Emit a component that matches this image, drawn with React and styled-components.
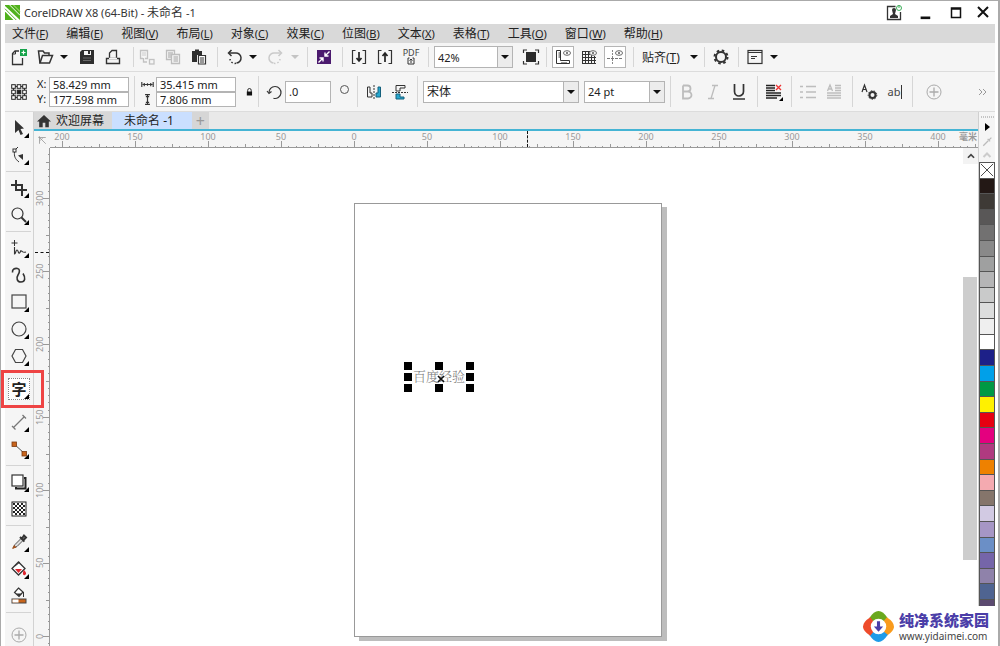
import React from 'react';
import styled, { createGlobalStyle, css } from 'styled-components';

const GlobalStyle = createGlobalStyle`
  * { box-sizing: border-box; }
  body {
    margin: 0;
    background: #fff;
    color: #222;
    font-family: 'Noto Sans', 'Noto Sans CJK SC', sans-serif;
    font-size: 12px;
  }
  button, input, select { font: inherit; color: inherit; }
`;

const MENUS = [
  ['文件', 'F'], ['编辑', 'E'], ['视图', 'V'], ['布局', 'L'], ['对象', 'C'], ['效果', 'C'],
  ['位图', 'B'], ['文本', 'X'], ['表格', 'T'], ['工具', 'O'], ['窗口', 'W'], ['帮助', 'H'],
];

const SWATCHES = [
  '#231815', '#3e3a36', '#595757', '#727171', '#898989', '#9fa0a0', '#b5b5b6', '#c9caca',
  '#dcdddd', '#efefef', '#ffffff', '#1d2088', '#00a0e9', '#009944', '#fff100', '#e60012',
  '#e4007f', '#b03a80', '#ee8100', '#f4aab0', '#85756b', '#d2cae3', '#a696c5', '#6b8fc6',
  '#7565a9', '#8f82aa', '#4f6491', '#5b4a70', '#5b4a70', '#5b4a70',
];

// the first cell of each ruler is only partly in view and has no number
const H_MARKS = ['', 200, 150, 100, 50, 0, 50, 100, 150, 200, 250, 300, 350, 400];
const V_MARKS = ['', 300, 250, 200, 150, 100, 50, 0];

const ICONS = {
  newDoc: (
    <>
      <path d="M8 2H4L1.500 4.500V15.500H11.500V9" stroke="#333" strokeWidth="1.300" />
      <path d="M4.500 2V5H1.500" stroke="#333" />
      <rect x="9" y="0" width="7" height="7" fill="#16a34a" />
      <path d="M12.500 1.500V5.500M10.500 3.500H14.500" stroke="#fff" strokeWidth="1.200" />
    </>
  ),
  open: (
    <>
      <path d="M3 14L1.500 2H6L7.500 4H12V6" stroke="#333" strokeWidth="1.500" />
      <path d="M3 14L5.500 6.500H15.500L12.500 14Z" stroke="#333" strokeWidth="1.500" fill="#f5f5f5" />
    </>
  ),
  save: (
    <>
      <path d="M3 1H15V15H1V3Z" fill="#2e2e2e" />
      <rect x="5" y="2" width="7" height="4" fill="#f5f5f5" />
      <rect x="9" y="2" width="2" height="3" fill="#2e2e2e" />
      <path d="M4 9H12M4 11.500H12" stroke="#777" strokeWidth=".8" />
    </>
  ),
  print: (
    <>
      <path d="M4.500 9.500V4L7 1.500H11.500V9.500" stroke="#333" strokeWidth="1.300" />
      <path d="M1.500 9.500H14.500V14.500H1.500Z" stroke="#333" strokeWidth="1.400" />
      <path d="M4 9.500H12" stroke="#f5f5f5" strokeWidth="1.500" />
    </>
  ),
  cut: (
    <g stroke="#c2c2c2" strokeWidth="1.300">
      <path d="M4 9.500H1.500V1.500H8.500V9.500H6" />
      <path d="M3 4H7M3 6H7" strokeWidth=".8" />
      <path d="M4.500 9V13H8" />
      <rect x="10.500" y="10.500" width="4.500" height="4.500" />
    </g>
  ),
  copy: (
    <g stroke="#bdbdbd" strokeWidth="1.300">
      <path d="M6 10.500H1.500V1.500H9.500V5M3 4H8M3 6H6M3 8H6" />
      <path d="M6.500 5.500H14.500V14.500H6.500ZM8.500 8H13M8.500 10H13M8.500 12H13" />
    </g>
  ),
  paste: (
    <>
      <path d="M1 2H4V0.500H8V2H11V6H6V13H1Z" fill="#2e2e2e" />
      <path d="M7.500 6.500H14.500V15H7.500Z" stroke="#333" strokeWidth="1.200" fill="#fff" />
      <path d="M9 9H13M9 11H13M9 13H13" stroke="#333" />
    </>
  ),
  undo: (
    <>
      <path d="M3 4H9.500A5 5 0 0 1 10.500 14" stroke="#333" strokeWidth="1.500" />
      <path d="M10 14.300A5 5 0 0 1 4 10" stroke="#333" strokeWidth="1.500" strokeDasharray="1.500 1.800" />
      <path d="M5.500 1L2.500 4L5.500 7" stroke="#333" strokeWidth="1.500" />
    </>
  ),
  redo: (
    <>
      <path d="M13 4H6.500A5 5 0 0 0 5.500 14" stroke="#cacaca" strokeWidth="1.500" />
      <path d="M6 14.300A5 5 0 0 0 12 10" stroke="#cacaca" strokeWidth="1.500" strokeDasharray="1.500 1.800" />
      <path d="M10.500 1L13.500 4L10.500 7" stroke="#cacaca" strokeWidth="1.500" />
    </>
  ),
  connect: (
    <>
      <rect x="1" y="1" width="14" height="14" fill="#4b1a6e" />
      <path d="M9 7L13.500 2.500M9 3.500V7H12.500M7 9L2.500 13.500M3.500 9H7V12.500" stroke="#fff" strokeWidth="1.400" />
    </>
  ),
  importFile: (
    <>
      <path d="M4.500 1.500H1.500V14.500H4.500M11.500 1.500H14.500V14.500H11.500" stroke="#333" strokeWidth="1.200" />
      <path d="M8 3V12M5.500 9L8 12L10.500 9" stroke="#222" strokeWidth="1.700" />
    </>
  ),
  exportFile: (
    <>
      <path d="M4.500 1.500H1.500V14.500H4.500M11.500 1.500H14.500V14.500H11.500" stroke="#333" strokeWidth="1.200" />
      <path d="M8 13V4M5.500 7L8 4L10.500 7" stroke="#222" strokeWidth="1.700" />
    </>
  ),
  uploadBox: (
    <path d="M2.500 1H1V7H7V1H5.500M4 6V2.500M2.500 3.500L4 2L5.500 3.500" stroke="#333" />
  ),
  fullScreen: (
    <>
      <rect x="3" y="3" width="10" height="10" fill="#2b2b2b" />
      <path d="M.5 4V1H4M12 1H15.500V4M15.500 12V15H12M4 15H.5V12" stroke="#333" strokeWidth="1.200" />
    </>
  ),
  rulers: (
    <>
      <path d="M1.500 1.500H5.500V11.500H14.500V14.500H1.500Z" stroke="#333" />
      <path d="M3.500 4H5.500M3.500 6H5.500M3.500 8H5.500M7 13V14M9 13V14M11 13V14" stroke="#333" />
      <ellipse cx="12" cy="4" rx="3.500" ry="2.300" stroke="#666" />
      <circle cx="12" cy="4" r="1" fill="#555" />
    </>
  ),
  grid: (
    <>
      <path d="M1.500 2V15M4.500 2V15M7.500 2V15M10.500 2V15M13.500 7V15M1 2.500H9M1 5.500H9M1 8.500H15M1 11.500H15M1 14.500H15" stroke="#333" />
      <ellipse cx="12" cy="4" rx="3.500" ry="2.300" stroke="#666" fill="#f5f5f5" />
      <circle cx="12" cy="4" r="1" fill="#555" />
    </>
  ),
  guides: (
    <>
      <path d="M5.500 1V15" stroke="#888" strokeDasharray="2 1" />
      <path d="M0 9.500H16" stroke="#777" strokeDasharray="3 1" />
      <ellipse cx="12" cy="4" rx="3.500" ry="2.300" stroke="#666" />
      <circle cx="12" cy="4" r="1" fill="#555" />
    </>
  ),
  gear: (
    <>
      <circle cx="8" cy="8" r="5" stroke="#333" strokeWidth="2" />
      <circle cx="8" cy="8" r="6.500" stroke="#333" strokeWidth="2" strokeDasharray="2.550 2.550" />
    </>
  ),
  launcher: (
    <>
      <rect x="1" y="1.500" width="14" height="13" stroke="#333" strokeWidth="1.200" />
      <path d="M1 3.500H15M4 7.500H10M4 9.500H8" stroke="#333" />
    </>
  ),
  origin: (
    <>
      <path d="M2.500 2.500H13.500V13.500H2.500Z" stroke="#333" />
      {[2.5, 8, 13.5].map((x) => [2.5, 8, 13.5].map((y) => (
        <rect key={`${x}-${y}`} x={x - 1.8} y={y - 1.8} width="3.600" height="3.600"
          stroke="#222" fill={x === 8 && y === 8 ? '#222' : '#fff'} />
      )))}
    </>
  ),
  rotate: (
    <>
      <path d="M2 9A6 6 0 1 1 6.500 14.300" stroke="#333" strokeWidth="1.200" />
      <path d="M0 7L2 9.500L4.500 7.500" stroke="#333" strokeWidth="1.200" />
    </>
  ),
  mirrorH: (
    <>
      <path d="M1.500 3V13H6V9H4V3Z" stroke="#333" />
      <path d="M8 1V16" stroke="#333" strokeDasharray="2 1" />
      <path d="M14.500 3V13H10V9H12V3Z" stroke="#14607c" fill="#27a7cf" />
    </>
  ),
  mirrorV: (
    <>
      <path d="M4 7V1.500H13V4H8V7Z" stroke="#333" />
      <path d="M0 8.500H16" stroke="#333" strokeDasharray="2 1" />
      <path d="M4 10V15H12V13H8V10Z" stroke="#14607c" fill="#27a7cf" />
    </>
  ),
  bold: <path d="M4 1.500V14.500H9A3.500 3.500 0 0 0 9 7.500H4M4 1.500H8.500A3 3 0 0 1 8.500 7.500" stroke="#bdbdbd" strokeWidth="1.800" />,
  italic: <path d="M7 1.500H13M3 14.500H9M10 1.500L6 14.500" stroke="#bdbdbd" strokeWidth="1.300" />,
  underline: <path d="M3.500 0V7.500A4.500 4.500 0 0 0 12.500 7.500V0M2 15H14" stroke="#333" strokeWidth="1.700" />,
  align: (
    <>
      <path d="M0 1.500H9M0 4H9M0 6.500H9M0 9H15M0 11.500H15M0 14H11" stroke="#222" strokeWidth="1.300" />
      <path d="M10 1L15 6M15 1L10 6" stroke="#e33" strokeWidth="1.300" />
      <path d="M17 13V17H13Z" fill="#000" />
    </>
  ),
  bullets: <path d="M0 2.500H3M0 8H3M0 13.500H3M6 2.500H16M6 8H16M6 13.500H16" stroke="#bdbdbd" strokeWidth="1.300" />,
  dropCap: <path d="M1.500 7L4 1L6.500 7M2.500 5H5.500M9 1.500H15M9 4H15M9 6.500H15M1 9H15M1 11.500H15M1 14H15" stroke="#bdbdbd" strokeWidth="1.300" />,
  textProps: (
    <>
      <path d="M1 8L3.500 1L6 8M2 5.500H5" stroke="#333" strokeWidth="1.200" />
      <circle cx="11.500" cy="11" r="3" stroke="#333" strokeWidth="2" />
      <circle cx="11.500" cy="11" r="4.300" stroke="#333" strokeDasharray="1.500 1.500" />
    </>
  ),
  plus: (
    <>
      <circle cx="8" cy="8" r="7" stroke="#aaa" />
      <path d="M8 3.500V12.500M3.500 8H12.500" stroke="#aaa" strokeWidth="1.300" />
    </>
  ),
  pick: <path d="M4 0V13L7.500 10L9.500 15L12 14L9.500 9L13 8.500Z" fill="#333" />,
  shape: (
    <>
      <path d="M3.500 5C3 9 4 12 8 15M4 3L7 0" stroke="#333" />
      <rect x="2" y="2" width="3" height="3" fill="#fff" stroke="#333" />
      <path d="M7 8.500L12 7V13Z" fill="#333" />
    </>
  ),
  crop: <path d="M5 0V10H16M0 5H11V16" stroke="#333" strokeWidth="2" />,
  zoom: (
    <>
      <circle cx="6.500" cy="6.500" r="5.500" stroke="#333" strokeWidth="1.200" />
      <path d="M10.500 10.500L15 15" stroke="#333" strokeWidth="2" />
    </>
  ),
  freehand: (
    <>
      <path d="M3.500 0V6M.5 3H6.500" stroke="#333" />
      <path d="M3.500 7V14C5 14 4.500 10 6 10S7 14 8.500 13S9 10 10.500 11S12 13 15 12" stroke="#333" strokeWidth="1.100" />
    </>
  ),
  artistic: <path d="M1.500 5.500C1 2 4 1 6.500 1.500S9 5 7 8S6 15 10 15S15 11 12 6.500" stroke="#333" strokeWidth="1.600" />,
  rect: <rect x="1" y="1" width="14" height="13" stroke="#444" strokeWidth="1.200" />,
  ellipse: <circle cx="8" cy="8" r="7" stroke="#444" strokeWidth="1.200" />,
  polygon: <path d="M4.500 1.500H11.500L15 8L11.500 14.500H4.500L1 8Z" stroke="#444" strokeWidth="1.200" />,
  dimension: (
    <>
      <path d="M2.500 13.500L13 3" stroke="#777" strokeWidth="1.300" />
      <path d="M1 12L4.500 15.500M11.500 1L15 4.500" stroke="#777" strokeWidth="1.300" />
    </>
  ),
  connector: (
    <>
      <path d="M3 3L13 12" stroke="#555" />
      <rect x="1" y="1" width="4.500" height="4.500" fill="#c8641c" stroke="#7a3a10" strokeWidth=".8" />
      <rect x="11" y="10.500" width="4.500" height="4.500" fill="#c8641c" stroke="#7a3a10" strokeWidth=".8" />
    </>
  ),
  shadow: (
    <>
      <path d="M13 4H14.500V14.500H5V13" stroke="#222" strokeWidth="2" />
      <rect x="1" y="1" width="11" height="11" fill="#fff" stroke="#333" strokeWidth="1.200" />
    </>
  ),
  checker: (
    <>
      <rect x="1" y="1" width="14" height="14" fill="#fff" stroke="#222" />
      {[0, 1, 2, 3, 4, 5].map((r) => [0, 1, 2].map((c) => (
        <rect key={`${r}-${c}`} x={2 + c * 4 + (r % 2) * 2} y={2 + r * 2} width="2" height="2" fill="#222" />
      )))}
    </>
  ),
  dropper: (
    <>
      <path d="M2 14L4 10.500L10 4.500L12 6.500L6 12.500Z" fill="#ddd" stroke="#555" />
      <path d="M1 15L3 11L5.500 13.500Z" fill="#a5531c" />
      <path d="M9 3L13.500 7.500M11 4.500L13 1.500L15 3.500L12.500 6Z" stroke="#333" strokeWidth="2" />
    </>
  ),
  fill: (
    <>
      <path d="M7.500 1L14 7.500L7.500 14L1 7.500Z" fill="#fff" stroke="#333" strokeWidth="1.300" />
      <path d="M4 8H11L7.500 12Z" fill="#e0262e" />
      <path d="M13 9C15 11 16 13 14 14S11 12 13 9Z" fill="#e0262e" />
      <path d="M4 5L9 1" stroke="#333" />
    </>
  ),
  outline: (
    <>
      <path d="M7.500 0L12 4L8 8.500L3.500 4.500Z" fill="#fff" stroke="#333" strokeWidth="1.200" />
      <path d="M5 5.500H11L8 8.500Z" fill="#333" />
      <path d="M12.500 4V9" stroke="#333" />
      <rect x="1" y="11" width="14" height="4" fill="#c8641c" stroke="#444" />
      <rect x="1.500" y="11.500" width="6" height="3" fill="#fff" />
    </>
  ),
  home: <path d="M8 1L0 8.500H2.500V15H6.500V10H9.500V15H13.500V8.500H16Z" fill="#333" />,
  logo: (
    <>
      <path d="M0 0H16V16H0Z" fill="#4fb11c" />
      <path d="M0 1L16 16H9L0 7Z" fill="#fff" />
      <path d="M0 4L12 16" stroke="#4fb11c" />
      <path d="M5 0L16 11" stroke="#fff" />
      <path d="M9 0L16 7" stroke="#b8e08a" />
    </>
  ),
  user: (
    <>
      <path d="M9.500 1.500H1.500V14.500H14.500V7" stroke="#333" strokeWidth="1.300" />
      <path d="M6 5A2 2 0 0 1 10 5L9 9L12 11V13H4V11L7 9Z" fill="#333" />
      <circle cx="13" cy="3" r="2.500" stroke="#3dae5a" />
      <path d="M13 0V3" stroke="#3dae5a" />
    </>
  ),
  minimize: <path d="M3 13.500H14" stroke="#111" strokeWidth="3" />,
  maximize: <path d="M3.500 3H12.500V12.500H3.500ZM3.500 4H12.500" stroke="#111" strokeWidth="1.500" />,
  close: <path d="M3 2L13 12M13 2L3 12" stroke="#111" strokeWidth="2" />,
  widthArrow: <path d="M1 5V11M15 5V11M2 8H14M4 6V10M12 6V10M8 6.500V9.500" stroke="#333" strokeWidth="1.400" />,
  heightArrow: <path d="M5 2H11M5 14H11M8 2V14M6 4.500H10M6 11.500H10" stroke="#333" strokeWidth="1.500" />,
  lock: (
    <>
      <rect x="5.500" y="7.500" width="6" height="4.500" fill="#111" />
      <path d="M6.500 8V6A2 2 0 0 1 10.500 6V8" stroke="#111" />
    </>
  ),
  chevronUp: <path d="M4.500 10L8 6.500L11.500 10" stroke="currentColor" strokeWidth="2" />,
  chevrons: <path d="M5 5L8 8L5 11M9 5L12 8L9 11" stroke="#999" />,
  cross: <path d="M1 1L15 15M15 1L1 15" stroke="#333" />,
  corner: <path d="M2 4H14M4 2V14M3 3L14 14M5 9L9 5" stroke="#999" strokeWidth="1.300" />,
  eyedropper: <path d="M2 14L10 6M9 3L13 7M11 5L15 1" stroke="#bbb" strokeWidth="2" />,
  centre: <path d="M4 4L12 12M12 4L4 12" stroke="#111" strokeWidth="2.200" />,
};

const Svg = styled.svg`
  display: block;
  flex: none;
  width: ${(p) => p.$size}px;
  height: ${(p) => p.$size}px;
  overflow: visible;
`;

const Icon = ({ name, size = 16 }) => (
  <Svg viewBox="0 0 16 16" fill="none" $size={size} aria-hidden="true">{ICONS[name]}</Svg>
);

const Arrow = styled.span`
  width: 0;
  height: 0;
  border: 4px solid transparent;
  border-top-color: ${(p) => (p.$muted ? '#c4c4c4' : '#111')};
  border-bottom: 0;
`;

const Latin = styled.span`
  font-size: 11px;
`;

const Window = styled.div`
  position: relative;
  display: flex;
  flex-direction: column;
  height: 100vh;
  padding: 0 3px 0 4px;
  overflow: hidden;
  border: solid #aaa;
  border-width: 1px 2px 0 1px;
`;

const TitleBar = styled.header`
  display: flex;
  align-items: center;
  flex: none;
  height: 23px;
  color: #333;
`;

const Title = styled.h1`
  flex: 1;
  margin: 0 0 0 4px;
  font-size: 12px;
  font-weight: 400;
  line-height: 20px;
`;

const TitleButton = styled.button`
  display: grid;
  place-items: center;
  width: 31px;
  height: 22px;
  padding: 0;
  border: 0;
  background: none;
  &:last-child { width: 24px; }
`;

const MenuBar = styled.nav`
  display: flex;
  flex: none;
  height: 19px;
  background: #d9d9d9;
`;

const MenuButton = styled.button`
  padding: 0 11px 0 7px;
  border: 0;
  background: none;
  line-height: 19px;
  white-space: nowrap;
`;

const Bar = styled.div`
  display: flex;
  flex: none;
  height: ${(p) => p.$height}px;
  padding: 4px 0;
  border-bottom: 1px solid #dcdcdc;
  background: #f5f5f5;
`;

const Group = styled.div`
  display: flex;
  align-items: center;
  flex: none;
  width: ${(p) => p.$width}px;
  padding-left: ${(p) => p.$pad || 0}px;
  border-right: 1px solid #d6d6d6;
  &:last-child { flex: 1; border: 0; }
`;

const ToolButton = styled.button`
  display: flex;
  flex-direction: column;
  align-items: center;
  justify-content: center;
  flex: none;
  width: 26px;
  height: 26px;
  padding: 0;
  border: 0;
  background: none;
`;

const ActiveTool = styled(ToolButton)`
  width: 22px;
  height: 22px;
  margin: 0 2px;
  border: 1px solid #b5b5b5;
  background: #fff;
`;

const CaretButton = styled(ToolButton)`
  align-items: flex-start;
  width: 16px;
  padding-left: 2px;
`;

const PushRight = styled.span`
  flex: 1;
`;

const PdfText = styled.span`
  color: #444;
  font-size: 9px;
  line-height: 8px;
`;

const TextButton = styled.button`
  padding: 0;
  border: 0;
  background: none;
  white-space: nowrap;
`;

const SelectBox = styled.span`
  position: relative;
  display: block;
  flex: none;
  width: ${(p) => p.$width}px;
  margin-right: 5px;
  height: 22px;

  select {
    width: 100%;
    height: 100%;
    padding: 0 3px;
    border: 1px solid #b4b4b4;
    border-radius: 0;
    appearance: none;
    background: #fff;
    font-size: ${(p) => p.$text}px;
  }
`;

const SelectArrow = styled.span`
  position: absolute;
  top: 1px;
  right: 1px;
  bottom: 1px;
  display: grid;
  place-items: center;
  width: 15px;
  border-left: 1px solid #b4b4b4;
  background: #ececec;
  pointer-events: none;
`;

const FieldGrid = styled.div`
  display: grid;
  grid-template-columns: ${(p) => p.$label}px 80px;
  align-items: center;
  font-size: 11px;

  label {
    display: flex;
    line-height: 14px;
  }
`;

const NumberInput = styled.input`
  width: ${(p) => (p.$tall ? 46 : 80)}px;
  height: ${(p) => (p.$tall ? 22 : 15)}px;
  padding: 0 3px;
  border: 1px solid #b4b4b4;
  background: #fff;
  font-size: 11px;
  line-height: 13px;
`;

const AngleLabel = styled.label`
  display: grid;
  place-items: center;
  width: 20px;
`;

const Ring = styled.span`
  width: 9px;
  height: 9px;
  margin: 0 0 5px 9px;
  border: 1px solid #555;
  border-radius: 50%;
`;

const CaretText = styled.span`
  padding-right: 1px;
  border-right: 1px solid #333;
  color: #444;
  font-size: 11px;
  line-height: 14px;
`;

const Body = styled.div`
  display: flex;
  flex: 1;
  min-height: 0;
`;

const Toolbox = styled.aside`
  flex: none;
  width: 29px;
  padding: 2px 0 0 1px;
  border-right: 1px solid #d2d2d2;
  background: #f5f5f5;
`;

const ToolboxGroup = styled.div`
  margin: 0 2px 2px 0;
  padding-bottom: 3px;
  border-bottom: 1px solid #d4d4d4;
`;

const ToolboxFooter = styled.div`
  padding-top: 6px;
`;

const BoxButton = styled.button`
  position: relative;
  display: grid;
  place-items: center;
  width: 26px;
  height: 27px;
  padding: 0;
  border: 0;
  background: none;

  ${(p) => p.$flyout && css`
    &::after {
      content: '';
      position: absolute;
      right: 3px;
      bottom: 3px;
      border-style: solid;
      border-width: 0 0 5px 5px;
      border-color: transparent transparent #000;
    }
  `}
`;

const TextTool = styled.span`
  display: grid;
  place-items: center;
  width: 22px;
  height: 22px;
  border: 1px dotted #888;
  background: #fff;
  font-size: 15px;
  font-weight: 700;
  line-height: 20px;
`;

const Callout = styled.span`
  position: absolute;
  top: -5px;
  left: -5px;
  width: 43px;
  height: 38px;
  border: 3px solid #ee4444;
  z-index: 2;
`;

const Workspace = styled.main`
  display: flex;
  flex-direction: column;
  flex: 1;
  min-width: 0;
`;

const Tabs = styled.div`
  display: flex;
  flex: none;
  height: 19px;
  border-bottom: 2px solid #45b4d4;
  background: #e9e9e9;
`;

const Tab = styled.button`
  display: flex;
  align-items: center;
  gap: 5px;
  padding: 0 8px 0 3px;
  border: 0;
  background: #d8d8d8;
  line-height: 17px;
  white-space: nowrap;
`;

const ActiveTab = styled(Tab)`
  padding: 0 18px 0 12px;
  background: #cadfff;
`;

const AddTab = styled.button`
  width: 17px;
  padding: 0;
  border: 0;
  background: #d6d6d6;
  color: #999;
  font-size: 16px;
  line-height: 16px;
`;

const RulerRow = styled.div`
  display: flex;
  flex: none;
  height: 17px;
  background: #f5f5f5;
`;

const Corner = styled.div`
  display: grid;
  place-items: center;
  flex: none;
  width: 16px;
`;

const Ruler = styled.div`
  position: relative;
  display: flex;
  overflow: hidden;
  background: #f5f5f5;
  color: #999;
  font-size: 9px;
  line-height: 12px;
`;

const HRuler = styled(Ruler)`
  flex: 1;
  border-bottom: 1px solid #999;
  & > div:first-child { margin-left: -61px; }
`;

const VRuler = styled(Ruler)`
  flex: none;
  flex-direction: column;
  width: 16px;
  border-right: 1px solid #999;
  & > div:first-child { margin-top: -23px; }
`;

const HCell = styled.div`
  position: relative;
  flex: none;
  width: 73px;
  height: 16px;

  span {
    display: block;
    width: 40px;
    margin-left: -20px;
    text-align: center;
  }
  svg { position: absolute; left: 0; bottom: 0; }
`;

const VCell = styled.div`
  position: relative;
  display: flex;
  align-items: flex-start;
  flex: none;
  width: 15px;
  height: 73px;

  span {
    width: 12px;
    height: 40px;
    margin-top: -20px;
    text-align: center;
    writing-mode: vertical-rl;
    transform: rotate(180deg);
  }
  svg { position: absolute; top: 0; right: 0; }
`;

const Unit = styled.span`
  position: absolute;
  top: 0;
  right: 1px;
  background: #f5f5f5;
  font-weight: 700;
`;

const HPointer = styled.span`
  position: absolute;
  left: 477px;
  top: 0;
  bottom: 0;
  border-left: 1px dashed #111;
`;

const VPointer = styled.span`
  position: absolute;
  top: 104px;
  left: 1px;
  right: 0;
  border-top: 1px dashed #111;
`;

const View = styled.div`
  display: flex;
  flex: 1;
  min-height: 0;
`;

const Canvas = styled.div`
  position: relative;
  flex: 1;
  overflow: hidden;
  background: #fff;
`;

const Sheet = styled.div`
  position: absolute;
  left: 304px;
  top: 55px;
  width: 308px;
  height: 434px;
  border: 1px solid #999;
  background: #fff;
  box-shadow: 5px 4px 0 #bdbdbd;
`;

const Selection = styled.div`
  position: absolute;
  left: 49px;
  top: 158px;
  display: grid;
  grid-template-columns: repeat(3, 8px);
  grid-template-rows: repeat(3, 8px);
  justify-content: space-between;
  align-content: space-between;
  width: 70px;
  height: 30px;
`;

const ArtText = styled.span`
  position: absolute;
  inset: 0;
  color: #777;
  font-family: 'Noto Serif CJK SC', 'Noto Sans CJK SC', serif;
  font-size: 13px;
  font-weight: 300;
  line-height: 28px;
  text-align: center;
`;

const Handle = styled.i`
  position: relative;
  display: grid;
  place-items: center;
  background: ${(p) => (p.$centre ? 'none' : '#000')};
`;

const ScrollBar = styled.div`
  display: flex;
  flex-direction: column;
  flex: none;
  width: 15px;
  background: #fff;
`;

const ScrollUp = styled.button`
  display: grid;
  place-items: center;
  height: 16px;
  padding: 0;
  border: 0;
  background: #f3f3f3;
  color: #444;
`;

const ScrollThumb = styled.div`
  flex: 283;
  width: 14px;
  background: #cdcdcd;
`;

const Space = styled.div`
  flex: ${(p) => p.$grow};
`;

const Palette = styled.aside`
  display: flex;
  flex-direction: column;
  flex: none;
  width: 17px;
  border-left: 1px solid #d0d0d0;
  background: #f5f5f5;
`;

const PaletteHead = styled.div`
  display: flex;
  flex-direction: column;
  align-items: center;
  flex: none;
  height: 50px;
  padding-top: 4px;
  color: #ccc;
`;

const Grip = styled.span`
  width: 13px;
  height: 3px;
  border: dotted #c4c4c4;
  border-width: 1px 0;
`;

const PlayMark = styled.span`
  margin: 5px 0 6px;
  border: 4px solid transparent;
  border-left: 5px solid #000;
  border-right: 0;
`;

const Swatch = styled.button`
  display: grid;
  place-items: center;
  flex: 1;
  min-height: 0;
  padding: 0;
  border: 1px solid #555;
  border-bottom: 0;
  background: ${(p) => p.$color};
  overflow: hidden;
`;

const Watermark = styled.a`
  position: absolute;
  right: -2px;
  bottom: 0;
  display: flex;
  align-items: center;
  gap: 4px;
  width: 150px;
  height: 40px;
  padding-left: 12px;
  background: #fff;
  color: #4b3ea8;
  text-decoration: none;
  z-index: 3;
`;

const SiteName = styled.strong`
  display: block;
  font-size: 15px;
  font-weight: 900;
  line-height: 20px;
  white-space: nowrap;
`;

const SiteUrl = styled.small`
  display: block;
  color: #444;
  font-size: 10px;
  line-height: 12px;
`;

const tickLines = [0, 1, 2, 3, 4, 5, 6, 7, 8, 9];
const tickLength = (i) => (i === 0 ? 6 : i === 5 ? 3 : 1);

const HTicks = () => (
  <svg width="73" height="6" stroke="#999" aria-hidden="true">
    {tickLines.map((i) => {
      const x = Math.round(i * 7.3) + 0.5;
      return <path key={i} d={`M${x} 6V${6 - tickLength(i)}`} />;
    })}
  </svg>
);

const VTicks = () => (
  <svg width="6" height="73" stroke="#999" aria-hidden="true">
    {tickLines.map((i) => {
      const y = Math.round(i * 7.3) + 0.5;
      return <path key={i} d={`M6 ${y}H${6 - tickLength(i)}`} />;
    })}
  </svg>
);

const Tool = ({ name, label, size }) => (
  <ToolButton aria-label={label || name}><Icon name={name} size={size} /></ToolButton>
);

const Caret = ({ muted }) => (
  <CaretButton aria-label="more"><Arrow $muted={muted} /></CaretButton>
);

const Dropdown = ({ width, label, value, text = 11 }) => (
  <SelectBox $width={width} $text={text}>
    <select aria-label={label} defaultValue={value}>
      <option>{value}</option>
    </select>
    <SelectArrow><Arrow /></SelectArrow>
  </SelectBox>
);

const ToolboxButton = ({ name, flyout = true }) => (
  <BoxButton $flyout={flyout} aria-label={name}><Icon name={name} /></BoxButton>
);

const StandardBar = () => (
  <Bar $height={29}>
    <Group $width={129} $pad={1}>
      <Tool name="newDoc" />
      <Tool name="open" />
      <Caret />
      <Tool name="save" />
      <Tool name="print" />
    </Group>
    <Group $width={84}>
      <Tool name="cut" />
      <Tool name="copy" />
      <Tool name="paste" />
    </Group>
    <Group $width={90} $pad={3}>
      <Tool name="undo" />
      <Caret />
      <Tool name="redo" />
      <Caret muted />
    </Group>
    <Group $width={35} $pad={3}>
      <Tool name="connect" />
    </Group>
    <Group $width={86} $pad={3}>
      <Tool name="importFile" />
      <Tool name="exportFile" />
      <ToolButton aria-label="PDF">
        <PdfText>PDF</PdfText>
        <Svg viewBox="0 0 8 8" fill="none" $size={8}>{ICONS.uploadBox}</Svg>
      </ToolButton>
    </Group>
    <Group $width={118} $pad={5}>
      <Dropdown width={79} label="zoom" value="42%" />
      <Tool name="fullScreen" />
    </Group>
    <Group $width={87} $pad={3}>
      <ActiveTool aria-label="rulers"><Icon name="rulers" /></ActiveTool>
      <Tool name="grid" />
      <ActiveTool aria-label="guides"><Icon name="guides" /></ActiveTool>
    </Group>
    <Group $width={71} $pad={8}>
      <TextButton>贴齐(<u>T</u>)</TextButton>
      <PushRight />
      <Caret />
    </Group>
    <Group $width={34} $pad={3}>
      <Tool name="gear" />
    </Group>
    <Group $pad={3}>
      <Tool name="launcher" />
      <Caret />
    </Group>
  </Bar>
);

const PropertyBar = () => (
  <Bar $height={40}>
    <Group $width={130} $pad={1}>
      <Tool name="origin" />
      <PushRight />
      <FieldGrid $label={12}>
        <label htmlFor="pos-x">X:</label>
        <NumberInput id="pos-x" defaultValue="58.429 mm" />
        <label htmlFor="pos-y">Y:</label>
        <NumberInput id="pos-y" defaultValue="177.598 mm" />
      </FieldGrid>
      <PushRight />
    </Group>
    <Group $width={124} $pad={6}>
      <FieldGrid $label={15}>
        <label htmlFor="size-w" aria-label="width"><Icon name="widthArrow" size={13} /></label>
        <NumberInput id="size-w" defaultValue="35.415 mm" />
        <label htmlFor="size-h" aria-label="height"><Icon name="heightArrow" size={13} /></label>
        <NumberInput id="size-h" defaultValue="7.806 mm" />
      </FieldGrid>
      <ToolButton aria-label="lock ratio"><Icon name="lock" size={14} /></ToolButton>
    </Group>
    <Group $width={99} $pad={6}>
      <AngleLabel htmlFor="angle" aria-label="angle"><Icon name="rotate" /></AngleLabel>
      <NumberInput id="angle" $tall defaultValue=".0" />
      <Ring />
    </Group>
    <Group $width={60} $pad={3}>
      <Tool name="mirrorH" />
      <Tool name="mirrorV" />
    </Group>
    <Group $width={253} $pad={5}>
      <Dropdown width={156} label="font" value="宋体" text={12} />
      <Dropdown width={81} label="font size" value="24 pt" />
    </Group>
    <Group $width={87} $pad={3}>
      <Tool name="bold" />
      <Tool name="italic" />
      <Tool name="underline" />
    </Group>
    <Group $width={34} $pad={3}>
      <Tool name="align" />
    </Group>
    <Group $width={61} $pad={3}>
      <Tool name="bullets" />
      <Tool name="dropCap" />
    </Group>
    <Group $width={60} $pad={3}>
      <Tool name="textProps" />
      <ToolButton aria-label="edit text"><CaretText>ab</CaretText></ToolButton>
    </Group>
    <Group $pad={8}>
      <Tool name="plus" />
      <PushRight />
      <Tool name="chevrons" />
    </Group>
  </Bar>
);

const ToolPanel = () => (
  <Toolbox>
    <ToolboxGroup>
      <ToolboxButton name="pick" />
      <ToolboxButton name="shape" />
    </ToolboxGroup>
    <ToolboxGroup>
      <ToolboxButton name="crop" />
      <ToolboxButton name="zoom" />
    </ToolboxGroup>
    <ToolboxGroup>
      <ToolboxButton name="freehand" />
      <ToolboxButton name="artistic" flyout={false} />
      <ToolboxButton name="rect" />
      <ToolboxButton name="ellipse" />
      <ToolboxButton name="polygon" />
    </ToolboxGroup>
    <ToolboxGroup>
      <BoxButton $flyout>
        <TextTool>字</TextTool>
        <Callout />
      </BoxButton>
    </ToolboxGroup>
    <ToolboxGroup>
      <ToolboxButton name="dimension" />
      <ToolboxButton name="connector" />
    </ToolboxGroup>
    <ToolboxGroup>
      <ToolboxButton name="shadow" />
      <ToolboxButton name="checker" flyout={false} />
    </ToolboxGroup>
    <ToolboxGroup>
      <ToolboxButton name="dropper" />
      <ToolboxButton name="fill" />
      <ToolboxButton name="outline" flyout={false} />
    </ToolboxGroup>
    <ToolboxFooter>
      <ToolboxButton name="plus" flyout={false} />
    </ToolboxFooter>
  </Toolbox>
);

const App = () => (
  <>
    <GlobalStyle />
    <Window>
      <TitleBar>
        <Icon name="logo" size={15} />
        <Title><Latin>CorelDRAW X8 (64-Bit) - </Latin>未命名<Latin> -1</Latin></Title>
        <TitleButton aria-label="account"><Icon name="user" /></TitleButton>
        <TitleButton aria-label="minimize"><Icon name="minimize" size={14} /></TitleButton>
        <TitleButton aria-label="maximize"><Icon name="maximize" /></TitleButton>
        <TitleButton aria-label="close"><Icon name="close" /></TitleButton>
      </TitleBar>
      <MenuBar>
        {MENUS.map(([name, key]) => (
          <MenuButton key={name}>{name}<Latin>(<u>{key}</u>)</Latin></MenuButton>
        ))}
      </MenuBar>
      <StandardBar />
      <PropertyBar />
      <Body>
        <ToolPanel />
        <Workspace>
          <Tabs>
            <Tab><Icon name="home" size={14} />欢迎屏幕</Tab>
            <ActiveTab>未命名 -1</ActiveTab>
            <AddTab>+</AddTab>
          </Tabs>
          <RulerRow>
            <Corner><Icon name="corner" size={10} /></Corner>
            <HRuler>
              {H_MARKS.map((mark, i) => (
                <HCell key={i}><span>{mark}</span><HTicks /></HCell>
              ))}
              <Unit>毫米</Unit>
              <HPointer />
            </HRuler>
          </RulerRow>
          <View>
            <VRuler>
              {V_MARKS.map((mark, i) => (
                <VCell key={i}><span>{mark}</span><VTicks /></VCell>
              ))}
              <VPointer />
            </VRuler>
            <Canvas>
              <Sheet>
                <Selection>
                  <ArtText>百度经验</ArtText>
                  {[0, 1, 2, 3, 4, 5, 6, 7, 8].map((i) => (
                    <Handle key={i} $centre={i === 4}>
                      {i === 4 && <Icon name="centre" size={12} />}
                    </Handle>
                  ))}
                </Selection>
              </Sheet>
            </Canvas>
            <ScrollBar>
              <ScrollUp aria-label="scroll up"><Icon name="chevronUp" size={14} /></ScrollUp>
              <Space $grow={113} />
              <ScrollThumb />
              <Space $grow={86} />
            </ScrollBar>
          </View>
        </Workspace>
        <Palette>
          <PaletteHead>
            <Grip />
            <PlayMark />
            <Icon name="eyedropper" size={10} />
            <Icon name="chevronUp" size={16} />
          </PaletteHead>
          <Swatch $color="#fff" aria-label="none"><Icon name="cross" size={14} /></Swatch>
          {SWATCHES.map((color, i) => (
            <Swatch key={i} $color={color} aria-label={color} />
          ))}
        </Palette>
      </Body>
      <Watermark href="#">
        <Svg viewBox="0 0 32 32" $size={33} aria-hidden="true">
          <path d="M7 8Q16 -6 25 8L20 12H12Z" fill="#6aa81e" />
          <path d="M24 7Q38 16 24 25L20 20V12Z" fill="#f99b1c" />
          <path d="M25 24Q16 38 7 24L12 20H20Z" fill="#1e9be8" />
          <path d="M8 25Q-6 16 8 7L12 12V20Z" fill="#ee4b2b" />
          <circle cx="16" cy="16" r="7.500" fill="#fff" />
          <path d="M14.500 11H17.500V16H20.500L16 21L11.500 16H14.500Z" fill="#4b3ea8" />
        </Svg>
        <div>
          <SiteName>纯净系统家园</SiteName>
          <SiteUrl>www.yidaimei.com</SiteUrl>
        </div>
      </Watermark>
    </Window>
  </>
);

export default App;
